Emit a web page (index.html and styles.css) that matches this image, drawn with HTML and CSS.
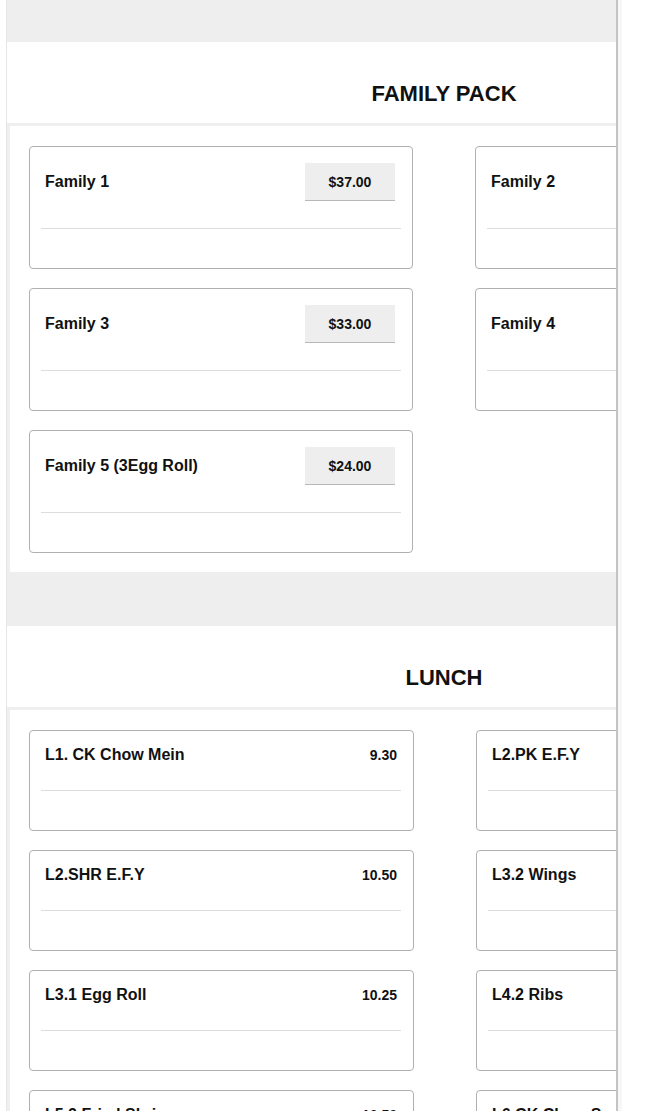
FILE: index.html
```html
<!DOCTYPE html>
<html lang="en">
<head>
<meta charset="utf-8">
<title>Menu</title>
<link rel="stylesheet" href="styles.css">
</head>
<body>
<div class="frame">
  <div class="menu">
    <div class="band band-top"></div>
    <section class="section">
      <h2 class="section-title">FAMILY PACK</h2>
      <div class="grid grid-family">
        <div class="card card-family">
          <div class="row"><span class="name">Family 1</span><span class="price-btn">$37.00</span></div>
          <div class="divider"></div>
        </div>
        <div class="card card-family">
          <div class="row"><span class="name">Family 2</span><span class="price-btn">$42.00</span></div>
          <div class="divider"></div>
        </div>
        <div class="card card-family">
          <div class="row"><span class="name">Family 3</span><span class="price-btn">$33.00</span></div>
          <div class="divider"></div>
        </div>
        <div class="card card-family">
          <div class="row"><span class="name">Family 4</span><span class="price-btn">$38.00</span></div>
          <div class="divider"></div>
        </div>
        <div class="card card-family">
          <div class="row"><span class="name">Family 5 (3Egg Roll)</span><span class="price-btn">$24.00</span></div>
          <div class="divider"></div>
        </div>
      </div>
    </section>
    <div class="band"></div>
    <section class="section">
      <h2 class="section-title">LUNCH</h2>
      <div class="grid grid-lunch">
        <div class="card card-lunch">
          <div class="row"><span class="name">L1. CK Chow Mein</span><span class="price">9.30</span></div>
          <div class="divider"></div>
        </div>
        <div class="card card-lunch">
          <div class="row"><span class="name">L2.PK E.F.Y</span><span class="price">10.50</span></div>
          <div class="divider"></div>
        </div>
        <div class="card card-lunch">
          <div class="row"><span class="name">L2.SHR E.F.Y</span><span class="price">10.50</span></div>
          <div class="divider"></div>
        </div>
        <div class="card card-lunch">
          <div class="row"><span class="name">L3.2 Wings</span><span class="price">10.25</span></div>
          <div class="divider"></div>
        </div>
        <div class="card card-lunch">
          <div class="row"><span class="name">L3.1 Egg Roll</span><span class="price">10.25</span></div>
          <div class="divider"></div>
        </div>
        <div class="card card-lunch">
          <div class="row"><span class="name">L4.2 Ribs</span><span class="price">10.50</span></div>
          <div class="divider"></div>
        </div>
        <div class="card card-lunch">
          <div class="row"><span class="name">L5.2 Fried Shrimp</span><span class="price">10.50</span></div>
          <div class="divider"></div>
        </div>
        <div class="card card-lunch">
          <div class="row"><span class="name">L6.CK Chow Suey</span><span class="price">9.30</span></div>
          <div class="divider"></div>
        </div>
      </div>
    </section>
  </div>
</div>
</body>
</html>
```
FILE: styles.css
```css
html, body {
  margin: 0;
  padding: 0;
  background: #fff;
  font-family: "Liberation Sans", Arial, sans-serif;
  color: #111;
}

.frame {
  margin-left: 6px;
  width: 609px;
  height: 1111px;
  overflow: hidden;
  border-left: 1px solid #e6e6e6;
  border-right: 2px solid #c4c4c4;
  box-shadow: 4px 0 0 0 #f7f7f7;
}

.menu {
  width: 874px;
}

.band {
  height: 54px;
  background: #eeeeee;
}

.band-top {
  height: 42px;
}

.section-title {
  margin: 0;
  padding: 40px 0 17px;
  line-height: 24px;
  font-size: 22px;
  font-weight: bold;
  text-align: center;
  color: #111;
}

.grid {
  display: grid;
  column-gap: 62px;
  row-gap: 19px;
  border-top: 3px solid #efefef;
  border-left: 3px solid #efefef;
  padding: 20px 0 19px 19px;
}

.grid-family {
  grid-template-columns: 384px 384px;
}

.grid-lunch {
  grid-template-columns: 385px 385px;
}

.card {
  border: 1px solid #b0b0b0;
  border-radius: 4px;
  padding: 0 11px 39px;
  background: #fff;
}

.card-family {
  padding-top: 16px;
}

.card-lunch {
  padding-top: 13px;
  padding-right: 12px;
}

.row {
  display: flex;
  align-items: center;
  justify-content: space-between;
}

.card-family .row {
  height: 38px;
  padding: 0 6px 0 4px;
}

.card-lunch .row {
  height: 22px;
  padding: 0 4px 0 4px;
}

.name {
  font-size: 16px;
  font-weight: bold;
  color: #111;
  white-space: nowrap;
}

.price-btn {
  width: 90px;
  height: 37px;
  display: flex;
  align-items: center;
  justify-content: center;
  background: #eeeeee;
  border-bottom: 1px solid #b8b8b8;
  font-size: 14px;
  font-weight: bold;
  color: #111;
}

.price {
  font-size: 14px;
  font-weight: bold;
  color: #111;
}

.divider {
  height: 1px;
  background: #dddddd;
}

.card-family .divider {
  margin-top: 27px;
}

.card-lunch .divider {
  margin-top: 24px;
}
```
